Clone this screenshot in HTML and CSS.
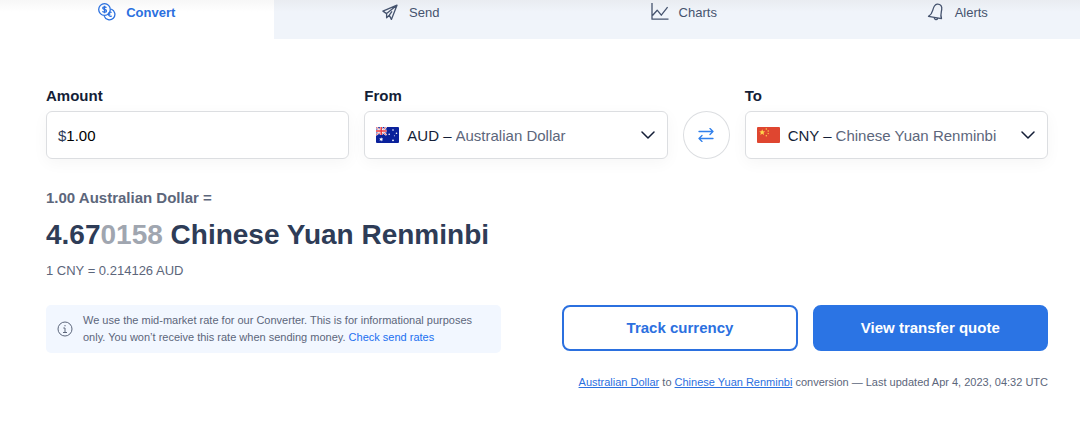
FILE: index.html
```html
<!DOCTYPE html>
<html lang="en">
<head>
<meta charset="utf-8">
<meta name="viewport" content="width=device-width, initial-scale=1">
<title>Currency Converter</title>
<link rel="stylesheet" href="styles.css">
</head>
<body>
<nav class="tabs" aria-label="Currency tools">
  <a class="tab tab-active" href="#convert" aria-current="page">
    <svg class="tab-icon" viewBox="0 0 18 18" aria-hidden="true"><circle cx="6.5" cy="6.5" r="5.8"/><path d="M8.400 4.700C8 4 7.300 3.800 6.500 3.800c-1.100 0-1.800.5-1.800 1.300 0 1.900 3.800.9 3.800 2.800 0 .8-.8 1.300-2 1.300-.9 0-1.700-.3-2-1M6.500 2.800v7.400"/><path d="M13.200 6.100a5.500 5.500 0 1 1-7 7"/><path d="M13.600 9.500c-1.400-1-3 0-3 1.700s1.600 2.700 3 1.700M9.800 11.200h2.600"/></svg>
    <span>Convert</span>
  </a>
  <a class="tab" href="#send">
    <svg class="tab-icon" viewBox="0 0 18 18" aria-hidden="true"><path d="M16 2.200 1.900 8.100l3.700 2.500 L16 2.200 10.400 16.400 8.300 12.200M5.600 10.600v4.200l2.700-2.600L11 8.300"/></svg>
    <span>Send</span>
  </a>
  <a class="tab" href="#charts">
    <svg class="tab-icon" viewBox="0 0 18 18" aria-hidden="true"><path d="M1 0v16.200h16.500M1.500 12.500l4.700-5.300 4.100 5 6.300-8"/></svg>
    <span>Charts</span>
  </a>
  <a class="tab" href="#alerts">
    <svg class="tab-icon" viewBox="0 0 18 18" aria-hidden="true"><path d="M1.500 13.400c2.800-1.600 3.600-3.500 4.200-6C6.500 4.200 7.200 1.600 10.200 1.200c3.700-.2 5 2.500 4.500 5.400-.5 2.900-1.600 5.500-.2 9zM7.200 14.800c.1 2 2.700 2.500 3.500.6"/></svg>
    <span>Alerts</span>
  </a>
</nav>

<main class="converter">
  <form class="fields">
    <div class="field">
      <label class="label" for="amount">Amount</label>
      <div class="box">
        <span class="symbol">$</span>
        <input class="amount" id="amount" type="text" inputmode="decimal" value="1.00">
      </div>
    </div>
    <div class="field">
      <label class="label" for="from">From</label>
      <div class="box">
        <svg class="flag" viewBox="0 0 23 16" aria-hidden="true"><rect width="23" height="16" rx="1" fill="#0a219b"/><path d="m0 0 10.500 8M10.500 0 0 8" stroke="#fff" stroke-width="1.800"/><path d="m0 0 10.500 8M10.500 0 0 8" stroke="#e8494e" stroke-width=".8"/><path d="M5.200 0v8M0 4h10.500" stroke="#fff" stroke-width="2.800"/><path d="M5.200 0v8M0 4h10.500" stroke="#e8373c" stroke-width="1.500"/><g fill="#fff"><path d="m5.200 10.300.5 1.200 1.300-.2-.7 1.100.7 1.100-1.300-.2-.5 1.200-.5-1.200-1.300.2.700-1.100-.7-1.100 1.300.2z"/><circle cx="17" cy="3" r=".8"/><circle cx="13.200" cy="7.300" r=".8"/><circle cx="20.500" cy="6.200" r=".8"/><circle cx="18.400" cy="8.800" r=".5"/><circle cx="17" cy="13.300" r=".9"/></g></svg>
        <span class="code">AUD –</span>
        <select class="currency" id="from"><option selected>Australian Dollar</option><option>Chinese Yuan Renminbi</option></select>
        <svg class="chevron" viewBox="0 0 14 8" aria-hidden="true"><path d="m1 1 6 6 6-6"/></svg>
      </div>
    </div>
    <button class="swap" type="button" aria-label="Swap currencies">
      <svg class="swap-icon" viewBox="0 0 16 14" aria-hidden="true"><path d="M1 3.500h14M12 .5l3 3-3 3M15 10.500H1M4 7.500l-3 3 3 3"/></svg>
    </button>
    <div class="field">
      <label class="label" for="to">To</label>
      <div class="box">
        <svg class="flag" viewBox="0 0 23 16" aria-hidden="true"><rect width="23" height="16" rx="1" fill="#df4630"/><g fill="#ffd54c"><path d="m5.200 2.200.8 2.100 2.200.1-1.700 1.400.6 2.200-1.900-1.200L3.300 8l.6-2.200-1.700-1.400 2.200-.1z"/><circle cx="9.300" cy="2" r=".7"/><circle cx="11.200" cy="4" r=".7"/><circle cx="11.200" cy="6.600" r=".7"/><circle cx="9.300" cy="8.700" r=".7"/></g></svg>
        <span class="code">CNY –</span>
        <select class="currency" id="to"><option selected>Chinese Yuan Renminbi</option><option>Australian Dollar</option></select>
        <svg class="chevron" viewBox="0 0 14 8" aria-hidden="true"><path d="m1 1 6 6 6-6"/></svg>
      </div>
    </div>
  </form>

  <section class="result">
    <p class="source">1.00 Australian Dollar =</p>
    <p class="total">4.67<span class="faded">0158</span> Chinese Yuan Renminbi</p>
    <p class="inverse">1 CNY = 0.214126 AUD</p>
  </section>

  <section class="lower">
    <div class="note">
      <svg class="info" viewBox="0 0 16 16" aria-hidden="true"><circle cx="8" cy="8" r="7"/><path d="M6.300 7H8v4.300M6 11.500h4M8 4v1.300"/></svg>
      <p class="note-text">We use the mid-market rate for our Converter. This is for informational purposes only. You won’t receive this rate when sending money. <a class="note-link" href="#rates">Check send rates</a></p>
    </div>
    <div class="side">
      <div class="actions">
        <button class="button button-outline" type="button">Track currency</button>
        <button class="button button-solid" type="button">View transfer quote</button>
      </div>
      <p class="updated"><a class="link" href="#aud">Australian Dollar</a> to <a class="link" href="#cny">Chinese Yuan Renminbi</a> conversion — Last updated Apr 4, 2023, 04:32 UTC</p>
    </div>
  </section>
</main>
</body>
</html>
```
FILE: styles.css
```css
* { box-sizing: border-box; }

body {
  margin: 0;
  overflow-x: hidden;
  background: #fff;
  color: #5c667b;
  font-family: "Liberation Sans", Arial, sans-serif;
  font-size: 15px;
}

p { margin: 0; }

.tabs {
  display: grid;
  grid-template-columns: repeat(4, 1fr);
  margin-right: -14px;
}

.tab {
  display: flex;
  justify-content: center;
  gap: 10px;
  height: 39px;
  padding-top: 3px;
  background: linear-gradient(#e9ecf1, #f0f4fa 12px);
  color: #45536e;
  font-size: 13px;
  line-height: 20px;
  text-decoration: none;
}

.tab-active {
  background: linear-gradient(#f7f7f7, #fff 12px);
  color: #2b70df;
  font-weight: bold;
}

.tab-icon {
  width: 18px;
  height: 18px;
  fill: none;
  stroke: currentColor;
  stroke-width: 1.3;
  stroke-linejoin: round;
}

.converter { padding: 48px 32px 44px 46px; }

.fields {
  display: grid;
  grid-template-columns: 1fr 1fr 47px 1fr;
  gap: 15px;
  align-items: end;
}

.field { min-width: 0; }

.label {
  display: block;
  margin-bottom: 6px;
  color: #141e37;
  font-weight: bold;
  line-height: 18px;
}

.box {
  display: flex;
  align-items: center;
  height: 48px;
  padding: 0 12px 0 11px;
  border: 1px solid #dcdee1;
  border-radius: 6px;
  background: #fff;
  box-shadow: 0 4px 16px rgba(0, 0, 0, 0.04);
}

.symbol { color: #2e3c57; }

.amount,
.currency {
  flex: 1;
  min-width: 0;
  height: 100%;
  padding: 0;
  border: 0;
  background: transparent;
  font: inherit;
}

.amount { color: #000; }

.currency {
  appearance: none;
  color: #5c667b;
}

.flag {
  flex: none;
  width: 23px;
  height: 16px;
  margin-right: 8px;
}

.code {
  margin-right: 4px;
  color: #141e37;
  white-space: nowrap;
}

.chevron {
  flex: none;
  width: 14px;
  height: 8px;
  fill: none;
  stroke: #141e37;
  stroke-width: 1.5;
  stroke-linecap: round;
  stroke-linejoin: round;
}

.swap {
  display: grid;
  place-items: center;
  height: 48px;
  padding: 0;
  border: 1px solid #dcdee1;
  border-radius: 50%;
  background: #fff;
}

.swap-icon {
  width: 16px;
  height: 14px;
  fill: none;
  stroke: #3180ec;
  stroke-width: 1.3;
  stroke-linecap: round;
  stroke-linejoin: round;
}

.result { margin-top: 30px; }

.source {
  font-weight: bold;
  line-height: 18px;
}

.total {
  margin-top: 10px;
  color: #2e3c57;
  font-size: 28px;
  font-weight: bold;
  line-height: 36px;
}

.faded { color: #a0a6b0; }

.inverse {
  margin-top: 10px;
  font-size: 13px;
  line-height: 16px;
}

.lower {
  display: grid;
  grid-template-columns: 15fr 16fr;
  gap: 61px;
  align-items: start;
  margin-top: 26px;
}

.note {
  display: flex;
  align-items: center;
  gap: 10px;
  padding: 7px 11px;
  border-radius: 5px;
  background: #f2f7ff;
}

.info {
  flex: none;
  width: 16px;
  height: 16px;
  fill: none;
  stroke: #5c667b;
}

.note-text {
  font-size: 11px;
  line-height: 17px;
}

.note-link {
  color: #1b6ff0;
  text-decoration: none;
}

.actions {
  display: grid;
  grid-template-columns: 1fr 1fr;
  gap: 15px;
}

.button {
  height: 46px;
  padding: 0 0 2px;
  border: 2px solid #2b70df;
  border-radius: 8px;
  font: inherit;
  font-weight: bold;
}

.button-outline {
  background: #fff;
  color: #2b70df;
}

.button-solid {
  border-color: #2b74e4;
  background: #2b74e4;
  color: #fff;
}

.updated {
  margin-top: 23px;
  font-size: 11px;
  line-height: 16px;
  text-align: right;
}

.link { color: #2b70df; }
```
